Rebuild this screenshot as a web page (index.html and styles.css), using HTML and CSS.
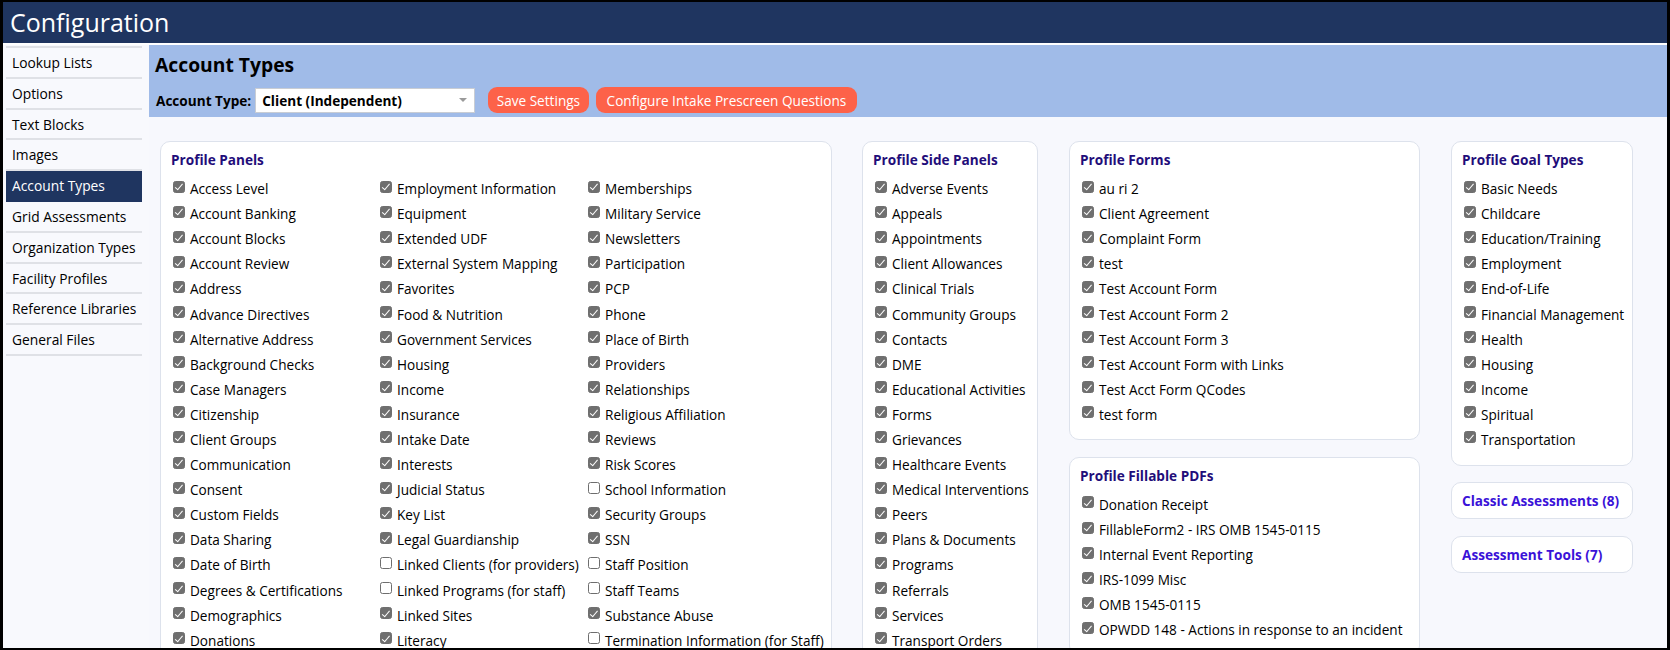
FILE: index.html
```html
<!DOCTYPE html>
<html>
<head>
<meta charset="utf-8">
<title>Configuration</title>
<link rel="stylesheet" href="styles.css">
</head>
<body>
<div class="frame">
  <header class="topbar">Configuration</header>
  <div class="layout">
    <nav class="sidebar">
      <a class="nav-item">Lookup Lists</a>
      <a class="nav-item">Options</a>
      <a class="nav-item">Text Blocks</a>
      <a class="nav-item">Images</a>
      <a class="nav-item active">Account Types</a>
      <a class="nav-item">Grid Assessments</a>
      <a class="nav-item">Organization Types</a>
      <a class="nav-item">Facility Profiles</a>
      <a class="nav-item">Reference Libraries</a>
      <a class="nav-item">General Files</a>
    </nav>
    <main class="main">
      <div class="toolbar">
        <h1 class="page-title">Account Types</h1>
        <div class="controls">
          <span class="ctl-label">Account Type:</span>
          <div class="select"><span>Client (Independent)</span><span class="caret"></span></div>
          <button class="btn">Save Settings</button>
          <button class="btn btn-wide">Configure Intake Prescreen Questions</button>
        </div>
      </div>
      <div class="cards">
        <section class="card card-panels">
          <h2 class="card-title">Profile Panels</h2>
          <div class="cols">
            <ul class="list col1">
              <li><span class="cb on"></span>Access Level</li>
              <li><span class="cb on"></span>Account Banking</li>
              <li><span class="cb on"></span>Account Blocks</li>
              <li><span class="cb on"></span>Account Review</li>
              <li><span class="cb on"></span>Address</li>
              <li><span class="cb on"></span>Advance Directives</li>
              <li><span class="cb on"></span>Alternative Address</li>
              <li><span class="cb on"></span>Background Checks</li>
              <li><span class="cb on"></span>Case Managers</li>
              <li><span class="cb on"></span>Citizenship</li>
              <li><span class="cb on"></span>Client Groups</li>
              <li><span class="cb on"></span>Communication</li>
              <li><span class="cb on"></span>Consent</li>
              <li><span class="cb on"></span>Custom Fields</li>
              <li><span class="cb on"></span>Data Sharing</li>
              <li><span class="cb on"></span>Date of Birth</li>
              <li><span class="cb on"></span>Degrees &amp; Certifications</li>
              <li><span class="cb on"></span>Demographics</li>
              <li><span class="cb on"></span>Donations</li>
            </ul>
            <ul class="list col2">
              <li><span class="cb on"></span>Employment Information</li>
              <li><span class="cb on"></span>Equipment</li>
              <li><span class="cb on"></span>Extended UDF</li>
              <li><span class="cb on"></span>External System Mapping</li>
              <li><span class="cb on"></span>Favorites</li>
              <li><span class="cb on"></span>Food &amp; Nutrition</li>
              <li><span class="cb on"></span>Government Services</li>
              <li><span class="cb on"></span>Housing</li>
              <li><span class="cb on"></span>Income</li>
              <li><span class="cb on"></span>Insurance</li>
              <li><span class="cb on"></span>Intake Date</li>
              <li><span class="cb on"></span>Interests</li>
              <li><span class="cb on"></span>Judicial Status</li>
              <li><span class="cb on"></span>Key List</li>
              <li><span class="cb on"></span>Legal Guardianship</li>
              <li><span class="cb"></span>Linked Clients (for providers)</li>
              <li><span class="cb"></span>Linked Programs (for staff)</li>
              <li><span class="cb on"></span>Linked Sites</li>
              <li><span class="cb on"></span>Literacy</li>
            </ul>
            <ul class="list col3">
              <li><span class="cb on"></span>Memberships</li>
              <li><span class="cb on"></span>Military Service</li>
              <li><span class="cb on"></span>Newsletters</li>
              <li><span class="cb on"></span>Participation</li>
              <li><span class="cb on"></span>PCP</li>
              <li><span class="cb on"></span>Phone</li>
              <li><span class="cb on"></span>Place of Birth</li>
              <li><span class="cb on"></span>Providers</li>
              <li><span class="cb on"></span>Relationships</li>
              <li><span class="cb on"></span>Religious Affiliation</li>
              <li><span class="cb on"></span>Reviews</li>
              <li><span class="cb on"></span>Risk Scores</li>
              <li><span class="cb"></span>School Information</li>
              <li><span class="cb on"></span>Security Groups</li>
              <li><span class="cb on"></span>SSN</li>
              <li><span class="cb"></span>Staff Position</li>
              <li><span class="cb"></span>Staff Teams</li>
              <li><span class="cb on"></span>Substance Abuse</li>
              <li><span class="cb"></span>Termination Information (for Staff)</li>
            </ul>
          </div>
        </section>

        <section class="card card-side">
          <h2 class="card-title">Profile Side Panels</h2>
          <ul class="list">
            <li><span class="cb on"></span>Adverse Events</li>
            <li><span class="cb on"></span>Appeals</li>
            <li><span class="cb on"></span>Appointments</li>
            <li><span class="cb on"></span>Client Allowances</li>
            <li><span class="cb on"></span>Clinical Trials</li>
            <li><span class="cb on"></span>Community Groups</li>
            <li><span class="cb on"></span>Contacts</li>
            <li><span class="cb on"></span>DME</li>
            <li><span class="cb on"></span>Educational Activities</li>
            <li><span class="cb on"></span>Forms</li>
            <li><span class="cb on"></span>Grievances</li>
            <li><span class="cb on"></span>Healthcare Events</li>
            <li><span class="cb on"></span>Medical Interventions</li>
            <li><span class="cb on"></span>Peers</li>
            <li><span class="cb on"></span>Plans &amp; Documents</li>
            <li><span class="cb on"></span>Programs</li>
            <li><span class="cb on"></span>Referrals</li>
            <li><span class="cb on"></span>Services</li>
            <li><span class="cb on"></span>Transport Orders</li>
          </ul>
        </section>

        <div class="stack stack-forms">
          <section class="card">
            <h2 class="card-title">Profile Forms</h2>
            <ul class="list">
              <li><span class="cb on"></span>au ri 2</li>
              <li><span class="cb on"></span>Client Agreement</li>
              <li><span class="cb on"></span>Complaint Form</li>
              <li><span class="cb on"></span>test</li>
              <li><span class="cb on"></span>Test Account Form</li>
              <li><span class="cb on"></span>Test Account Form 2</li>
              <li><span class="cb on"></span>Test Account Form 3</li>
              <li><span class="cb on"></span>Test Account Form with Links</li>
              <li><span class="cb on"></span>Test Acct Form QCodes</li>
              <li><span class="cb on"></span>test form</li>
            </ul>
          </section>
          <section class="card">
            <h2 class="card-title">Profile Fillable PDFs</h2>
            <ul class="list">
              <li><span class="cb on"></span>Donation Receipt</li>
              <li><span class="cb on"></span>FillableForm2 - IRS OMB 1545-0115</li>
              <li><span class="cb on"></span>Internal Event Reporting</li>
              <li><span class="cb on"></span>IRS-1099 Misc</li>
              <li><span class="cb on"></span>OMB 1545-0115</li>
              <li><span class="cb on"></span>OPWDD 148 - Actions in response to an incident</li>
            </ul>
          </section>
        </div>

        <div class="stack stack-goals">
          <section class="card">
            <h2 class="card-title">Profile Goal Types</h2>
            <ul class="list">
              <li><span class="cb on"></span>Basic Needs</li>
              <li><span class="cb on"></span>Childcare</li>
              <li><span class="cb on"></span>Education/Training</li>
              <li><span class="cb on"></span>Employment</li>
              <li><span class="cb on"></span>End-of-Life</li>
              <li><span class="cb on"></span>Financial Management</li>
              <li><span class="cb on"></span>Health</li>
              <li><span class="cb on"></span>Housing</li>
              <li><span class="cb on"></span>Income</li>
              <li><span class="cb on"></span>Spiritual</li>
              <li><span class="cb on"></span>Transportation</li>
            </ul>
          </section>
          <a class="card link-card">Classic Assessments (8)</a>
          <a class="card link-card">Assessment Tools (7)</a>
        </div>
      </div>
    </main>
  </div>
</div>
</body>
</html>
```
FILE: styles.css
```css
* { box-sizing: border-box; }
html, body { margin: 0; padding: 0; }
body {
  font-family: "Segoe UI", "Open Sans", "Noto Sans", sans-serif;
  font-size: 13.6px;
  color: #000;
  background: #fff;
}
.frame {
  width: 1670px;
  height: 650px;
  border-style: solid;
  border-color: #000;
  border-width: 2px 3px 2px 3px;
  background: #fff;
  display: flex;
  flex-direction: column;
  overflow: hidden;
}
.topbar {
  height: 41px;
  flex: none;
  background: #1f3560;
  color: #fff;
  font-size: 25px;
  line-height: 40px;
  padding-left: 7px;
  margin-bottom: 2px;
}
.layout {
  flex: 1;
  display: flex;
  min-height: 0;
}
.sidebar {
  width: 146px;
  flex: none;
  background: #f8f9fd;
  padding: 1px 7px 0 3px;
  display: flex;
  flex-direction: column;
}
.nav-item {
  display: block;
  height: 30.8px;
  line-height: 29px;
  padding-left: 6px;
  border-bottom: 2px solid #dfe1e6;
  color: #000;
  font-size: 13.8px;
  white-space: nowrap;
}
.nav-item:first-child {
  border-top: 2px solid #dfe1e6;
  height: 32.8px;
}
.nav-item.active {
  background: #1f3560;
  color: #fff;
  border-bottom-color: #1f3560;
}
.main {
  flex: 1;
  min-width: 0;
  background: #f7f8fd;
  display: flex;
  flex-direction: column;
  overflow: hidden;
}
.toolbar {
  height: 72px;
  flex: none;
  background: #a0bbe8;
  padding: 7px 6px 0 6px;
}
.page-title {
  margin: 0;
  font-size: 19.3px;
  font-weight: 700;
  line-height: 26px;
  color: #000;
}
.controls {
  margin-top: 9px;
  height: 26px;
  display: flex;
  align-items: center;
}
.ctl-label {
  font-weight: 700;
  font-size: 13.6px;
  color: #000;
  margin-left: 1px;
  margin-right: 4px;
}
.select {
  width: 220px;
  height: 25px;
  background: #fff;
  border: 1px solid #c9cdd4;
  display: flex;
  align-items: center;
  justify-content: space-between;
  padding: 0 6px 0 6px;
  font-weight: 700;
  font-size: 13.6px;
  color: #000;
}
.caret {
  width: 0;
  height: 0;
  border-left: 4px solid transparent;
  border-right: 4px solid transparent;
  border-top: 4px solid #9a9a9a;
  margin-right: 1px;
}
.btn {
  height: 26px;
  border: none;
  border-radius: 9px;
  background: #fd6249;
  color: #fff;
  font-family: inherit;
  font-size: 13.6px;
  padding: 0 8.5px;
  margin-left: 13px;
  cursor: pointer;
}
.btn + .btn { margin-left: 7px; }
.btn-wide { padding: 0 11px; }
.cards {
  flex: 1;
  display: flex;
  align-items: flex-start;
  padding: 24px 11px 0 11px;
}
.card {
  display: block;
  background: #fff;
  border: 1.5px solid #dde2ec;
  border-radius: 10px;
  padding: 8px 10px 12.5px 10px;
}
.card-panels { width: 672px; flex: none; }
.card-side { width: 176px; flex: none; margin-left: 30px; }
.stack {
  flex: none;
  display: flex;
  flex-direction: column;
  gap: 16.5px;
}
.stack-forms { width: 351px; margin-left: 31px; }
.stack-goals { width: 182px; margin-left: 31px; }
.card-title {
  margin: 0 0 6px 0;
  font-size: 13.6px;
  font-weight: 700;
  line-height: 20px;
  color: #1f0d7a;
}
.cols { display: flex; }
.col1 { width: 207px; flex: none; }
.col2 { width: 208px; flex: none; }
.col3 { flex: 1; }
.list {
  list-style: none;
  margin: 0;
  padding: 0;
}
.list li {
  height: 25.1px;
  display: flex;
  align-items: center;
  white-space: nowrap;
  font-size: 13.6px;
  color: #000;
}
.cb {
  position: relative;
  flex: none;
  width: 12px;
  height: 12px;
  margin-left: 2px;
  margin-right: 5px;
  border: 1px solid #6e6e6e;
  border-radius: 2.5px;
  background: #fff;
  transform: translateY(-2px);
}
.cb.on {
  background: #6f6f6f;
  border-color: #6f6f6f;
}
.cb.on::after {
  content: "";
  position: absolute;
  left: 3.4px;
  top: 0.8px;
  width: 3px;
  height: 6.5px;
  border: solid #fff;
  border-width: 0 1.8px 1.8px 0;
  transform: rotate(40deg);
}
.link-card {
  height: 37px;
  display: flex;
  align-items: center;
  padding: 0 10px;
  font-size: 13.6px;
  font-weight: 700;
  color: #3a12d8;
  cursor: pointer;
}
```
